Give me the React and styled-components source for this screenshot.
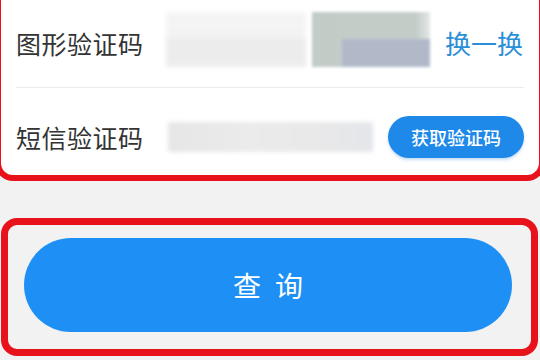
import React from 'react';
import styled, { createGlobalStyle } from "styled-components";

const Global = createGlobalStyle`
    html, body {
        margin: 0;
        padding: 0;
        background: #f2f2f2;
        font-family: "Noto Sans CJK SC", "Noto Sans", sans-serif;
    }
`;
const Page = styled.div`
    width: 540px;
    height: 360px;
    overflow: hidden;
    background: #f2f2f2;
`;
const Card = styled.div`
    background: #fff;
    border: 6px solid #e8121b;
    border-top: none;
    border-radius: 0 0 18px 18px;
    margin: 0 -5px;
    padding: 0 15px;
    height: 181px;
    box-sizing: border-box;
`;
const Row = styled.div`
    display: flex;
    align-items: center;
    height: ${p => (p.last ? "76px" : "85px")};
    padding-top: ${p => (p.last ? "11px" : "0")};
    padding-bottom: ${p => (p.last ? "0" : "2px")};
    border-bottom: ${p => (p.last ? "none" : "1px solid #ebebeb")};
`;
const Label = styled.div`
    width: 150px;
    flex-shrink: 0;
    font-size: 25px;
    color: #333;
    letter-spacing: 0.5px;
`;
const Blur = styled.div`
    width: ${p => p.w}px;
    height: ${p => p.h}px;
    margin-left: ${p => p.ml || 0}px;
    margin-bottom: ${p => p.mb || 0}px;
    background: ${p => p.bg};
    filter: blur(2px);
`;
const Captcha = styled.div`
    width: 118px;
    height: 55px;
    margin-left: 6px;
    margin-bottom: 6px;
    position: relative;
    background: linear-gradient(90deg, #c2cbc6 0%, #c4ccc8 88%, #e4e8e8 100%);
    filter: blur(1.5px);
    &::after {
        content: "";
        position: absolute;
        left: 30px;
        right: 0;
        top: 27px;
        bottom: 0;
        background: #b1b9c8;
    }
`;
const Refresh = styled.div`
    margin-left: auto;
    margin-right: 1px;
    font-size: 26px;
    color: #2b8fd8;
`;
const SmsButton = styled.button`
    margin-left: auto;
    width: 136px;
    height: 42px;
    border: none;
    border-radius: 21px;
    background: #1f89e9;
    color: #fff;
    font-family: inherit;
    font-size: 18px;
    font-weight: 500;
    box-shadow: 0 2px 3px rgba(30, 120, 220, 0.25);
`;
const Frame = styled.div`
    margin: 37px 2px 0 1px;
    height: 138px;
    box-sizing: border-box;
    border: 7px solid #e8121b;
    border-radius: 16px;
    padding: 13px 19px 0 16px;
`;
const Submit = styled.button`
    width: 100%;
    height: 94px;
    border: none;
    border-radius: 47px;
    background: #1e8ff5;
    color: #fff;
    font-family: inherit;
    font-size: 28px;
    letter-spacing: 14px;
    text-indent: 14px;
`;

const App = () => {
    return (
        <Page>
            <Global />
            <Card>
                <Row>
                    <Label>图形验证码</Label>
                    <Blur w={140} h={55} mb={6} bg="linear-gradient(180deg, #f5f5f5 0%, #f3f3f3 45%, #ececec 50%, #ededed 100%)" />
                    <Captcha />
                    <Refresh>换一换</Refresh>
                </Row>
                <Row last>
                    <Label>短信验证码</Label>
                    <Blur w={205} h={30} ml={2} bg="linear-gradient(90deg, #e6e6e6 0%, #ebebeb 40%, #e9e9e9 70%, #e3e6ea 100%)" />
                    <SmsButton>获取验证码</SmsButton>
                </Row>
            </Card>
            <Frame>
                <Submit>查询</Submit>
            </Frame>
        </Page>
    );
};

export default App;
